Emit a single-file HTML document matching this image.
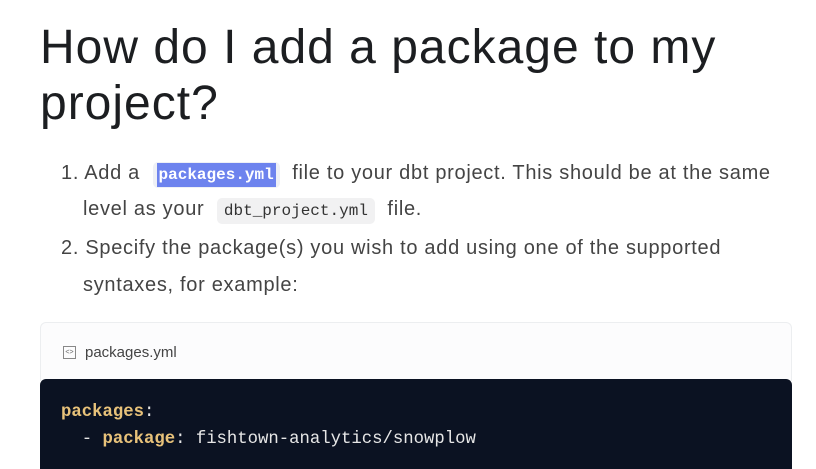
<!DOCTYPE html>
<html><head><style>
body{margin:0;width:816px;height:454px;overflow:hidden;background:#fff;font-family:"Liberation Sans",sans-serif;color:#1c1e21;position:relative}
h1{position:absolute;left:40px;top:20px;margin:0;font-size:48px;font-weight:normal;line-height:56px;color:#1c1e21;letter-spacing:1px;width:780px}
.li{position:absolute;left:61px;font-size:20px;color:#444;line-height:37px;white-space:nowrap;letter-spacing:0.7px}
code{font-family:"Liberation Mono",monospace;font-size:16px;background:#f1f1f2;border-radius:5px;padding:4px 7px;color:#333;letter-spacing:0}
.sel{background:#6d83ee;color:#fff;padding:3px 2px;font-weight:bold}
.hdr{position:absolute;left:40px;top:322px;width:750px;height:58px;border:1px solid #eceef0;border-bottom:none;border-radius:6px 6px 0 0;background:#fcfcfd}
.hdr span{position:absolute;left:44px;top:21px;font-size:15px;color:#444}
.ic{position:absolute;left:22px;top:23px;width:11px;height:11px;border:1px solid #888;font-size:7px;line-height:11px;text-align:center;color:#666}
.code{position:absolute;left:40px;top:379px;width:752px;height:90px;background:#0b1222;border-radius:6px 6px 0 0;font-family:"Liberation Mono",monospace;font-size:17.3px;color:#e6e6e6}
.code div{position:absolute;left:21px;white-space:pre}
.k{color:#e8c27a;font-weight:bold}
</style></head><body>
<h1>How do I add a package to my project?</h1>
<div class="li" style="top:155px">1. Add a &nbsp;<code style="background:#eef0f6;padding:4px 4px"><span class="sel">packages.yml</span></code>&nbsp; file to your dbt project. This should be at the same</div>
<div class="li" style="top:191px;left:83px">level as your &nbsp;<code>dbt_project.yml</code>&nbsp; file.</div>
<div class="li" style="top:230px">2. Specify the package(s) you wish to add using one of the supported</div>
<div class="li" style="top:267px;left:83px">syntaxes, for example:</div>
<div class="hdr"><div class="ic">&lt;&gt;</div><span>packages.yml</span></div>
<div class="code">
<div style="top:24px"><span class="k">packages</span>:</div>
<div style="top:51px">  - <span class="k">package</span>: fishtown-analytics/snowplow</div>
</div>
</body></html>
